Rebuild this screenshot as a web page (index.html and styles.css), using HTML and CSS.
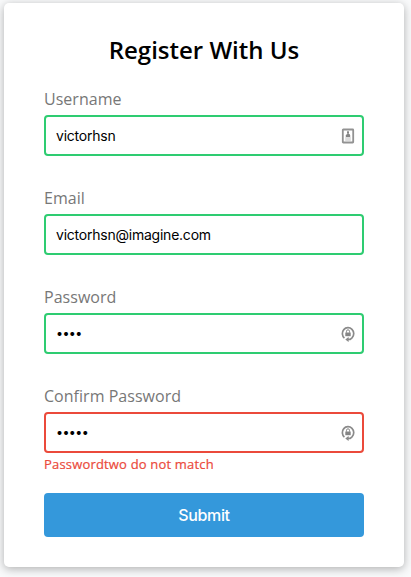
FILE: index.html
```html
<!DOCTYPE html>
<html lang="en">
<head>
<meta charset="utf-8">
<title>Register</title>
<link rel="stylesheet" href="styles.css">
</head>
<body>
<svg width="0" height="0" class="defs" aria-hidden="true">
  <symbol id="key" viewBox="0 0 16 18">
    <path d="M4.4 13.1A5.7 5.9 0 1 1 12 12.8L10.2 14.3H8" fill="none" stroke="#8a8a8a" stroke-width="1.7"/>
    <path d="M8.6 11.9V16.9L5.3 14.4z" fill="#8a8a8a"/>
    <rect x="5.3" y="7.5" width="5.4" height="3.7" fill="#858585"/>
    <path d="M6.5 7.6V6.3a1.5 1.5 0 0 1 3 0v1.3" fill="none" stroke="#858585" stroke-width="1"/>
  </symbol>
</svg>
<main class="card">
  <form class="form">
    <h2>Register With Us</h2>
    <div class="field success">
      <label for="username">Username</label>
      <div class="control">
        <input id="username" type="text" value="victorhsn">
        <svg class="icon" viewBox="0 0 16 18">
          <rect x="2.8" y="2.5" width="10.4" height="13" rx=".5" fill="#fff" stroke="#929292" stroke-width="1.8"/>
          <rect x="7" y="4.3" width="2" height="2.4" fill="#858585"/>
          <path d="M5.8 9.9V8.6Q5.8 7 8 6.7T10.2 8.6v1.3z" fill="#858585"/>
          <path d="M5.2 11h5.6M5.2 13h5.6" stroke="#bbb" stroke-width="1.2"/>
        </svg>
      </div>
    </div>
    <div class="field success">
      <label for="email">Email</label>
      <div class="control"><input id="email" type="text" value="victorhsn@imagine.com"></div>
    </div>
    <div class="field success">
      <label for="password">Password</label>
      <div class="control">
        <input id="password" class="secret" type="text" value="••••">
        <svg class="icon"><use href="#key"/></svg>
      </div>
    </div>
    <div class="field error">
      <label for="password2">Confirm Password</label>
      <div class="control">
        <input id="password2" class="secret" type="text" value="•••••">
        <svg class="icon"><use href="#key"/></svg>
      </div>
      <small>Passwordtwo do not match</small>
    </div>
    <button type="button">Submit</button>
  </form>
</main>
</body>
</html>
```
FILE: styles.css
```css
* { box-sizing: border-box; }
body {
  margin: 0;
  height: 577px;
  padding: 3px 7px 10px 4px;
  overflow: hidden;
  background: #f9fafb;
  font-family: "Open Sans", sans-serif;
}
.defs { position: absolute; }
.card {
  width: 400px;
  height: 564px;
  background: #fff;
  border-radius: 5px;
  box-shadow: 0 2px 10px rgba(0, 0, 0, .3);
}
.form { padding: 30px 40px; }
h2 {
  margin: 0 0 20px;
  font-size: 24px;
  font-weight: 600;
  line-height: 33px;
  text-align: center;
  color: #000;
}
.field { height: 99px; }
label {
  display: block;
  margin-bottom: 4px;
  padding-top: 2px;
  font-size: 16px;
  line-height: 23px;
  letter-spacing: .03px;
  color: #777;
}
.control {
  display: flex;
  align-items: center;
  height: 41px;
  padding: 0 6px 0 10px;
  border: 2px solid #2ecc71;
  border-radius: 4px;
}
.error .control { border-color: #eb4a3b; }
input {
  flex: 1;
  min-width: 0;
  padding: 0;
  border: 0;
  outline: 0;
  background: none;
  font: 14px Inter, sans-serif;
  letter-spacing: -.23px;
  color: #000;
}
.secret {
  font-size: 12.5px;
  letter-spacing: -.6px;
}
.icon { width: 16px; height: 18px; flex: none; }
small {
  display: block;
  margin-top: 2px;
  font-size: 13px;
  font-weight: 500;
  letter-spacing: .18px;
  line-height: 18px;
  color: #eb4a3b;
  -webkit-text-stroke: .2px #eb4a3b;
}
button {
  display: block;
  width: 100%;
  height: 44px;
  margin-top: 11px;
  padding: 0;
  border: 0;
  border-radius: 4px;
  background: #3498db;
  color: #fff;
  font: 500 16px Inter, sans-serif;
  letter-spacing: -.35px;
}
```
